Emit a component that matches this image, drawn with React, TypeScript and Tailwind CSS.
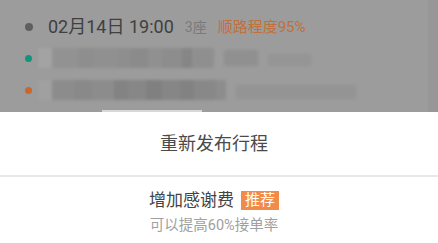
import React from "react";

// mosaic pieces for the blurred address lines: [width, colour]
const ROW_A: [number, string][] = [
  [14, "#a3a3a3"], [26, "#929292"], [16, "#8e8e8e"], [24, "#909090"], [12, "#8e8e8e"],
  [18, "#8b8b8b"], [14, "#909090"], [20, "#8d8d8d"], [10, "#868686"], [22, "#8f8f8f"],
];
const ROW_B: [number, string][] = [
  [14, "#a0a0a0"], [22, "#8c8c8c"], [18, "#898989"], [22, "#8c8c8c"], [14, "#838383"],
  [18, "#878787"], [16, "#808080"], [18, "#868686"], [14, "#828282"], [22, "#888888"], [10, "#8d8d8d"],
];

function Mosaic({ pieces }: { pieces: [number, string][] }) {
  return (
    <div className="flex h-[20px] blur-[1.5px]">
      {pieces.map(([w, c], i) => (
        <div key={i} className="h-full" style={{ width: w, background: c }} />
      ))}
    </div>
  );
}

export default function App() {
  return (
    <div
      className="w-[438px] h-[243px] bg-white overflow-hidden"
      style={{ fontFamily: '"Roboto", "Noto Sans CJK SC", sans-serif' }}
    >
      {/* ── dimmed trip card ─────────────────────────────── */}
      <div className="relative h-[112px] bg-[#9c9c9c] pt-[16px]">
        <div className="absolute right-0 top-0 h-full w-[10px] bg-[#979797]" />

        <div className="flex items-center h-[22px] pl-[25px]">
          <span className="w-[8px] h-[8px] rounded-full bg-[#5f5f5f]" />
          <span className="ml-[15px] text-[18px] leading-none text-[#404040]">02月14日 19:00</span>
          <span className="ml-[11px] text-[14px] leading-none text-[#7a7a7a]">3座</span>
          <span className="ml-[11px] text-[15px] leading-none text-[#c2703a]">顺路程度95%</span>
        </div>

        <div className="flex items-center h-[20px] mt-[10px] pl-[25px]">
          <span className="w-[7px] h-[7px] rounded-full bg-[#14947a]" />
          <div className="ml-[6px] flex items-center gap-[10px]">
            <Mosaic pieces={ROW_A} />
            <div className="w-[34px] h-[16px] bg-[#909090] blur-[1.5px]" />
            <div className="w-[43px] h-[12px] mt-[4px] bg-[#959595] blur-[1.5px]" />
          </div>
        </div>

        <div className="flex items-center h-[20px] mt-[12px] pl-[25px]">
          <span className="w-[7px] h-[7px] rounded-full bg-[#c8682e]" />
          <div className="ml-[6px] flex items-center gap-[10px]">
            <Mosaic pieces={ROW_B} />
            <div className="w-[120px] h-[14px] mt-[4px] bg-[#949494] blur-[1.5px]" />
          </div>
        </div>

        <div className="mt-[10px] ml-[102px] w-[100px] h-[2px] bg-[#d8d8d8]" />
      </div>

      {/* ── action sheet ─────────────────────────────────── */}
      <div className="w-[428px]">
        <div className="h-[63px] flex items-center justify-center text-[18px] text-[#4a4a4a]">
          重新发布行程
        </div>
        <div className="w-[438px] h-[2px] bg-[#e8e8e8]" />
        <div className="flex flex-col items-center pt-[13px]">
          <div className="flex items-center">
            <span className="text-[17px] leading-[20px] text-[#444444]">增加感谢费</span>
            <span className="ml-[7px] px-[4px] h-[19px] flex items-center bg-[#f28a4a] text-white text-[15px] leading-none">
              推荐
            </span>
          </div>
          <div className="mt-[9px] text-[14.5px] leading-none text-[#a0a0a0]">可以提高60%接单率</div>
        </div>
      </div>
    </div>
  );
}
